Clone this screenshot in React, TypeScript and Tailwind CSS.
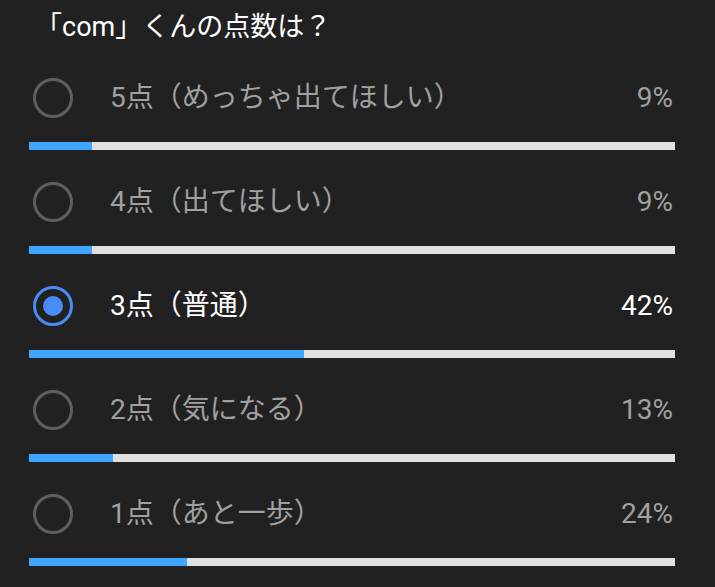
import React from "react";

const items = [
  { label: "5点（めっちゃ出てほしい）", pct: "9%", w: 63, sel: false },
  { label: "4点（出てほしい）", pct: "9%", w: 63, sel: false },
  { label: "3点（普通）", pct: "42%", w: 275, sel: true },
  { label: "2点（気になる）", pct: "13%", w: 84, sel: false },
  { label: "1点（あと一歩）", pct: "24%", w: 158, sel: false },
];

export default function App() {
  return (
    <div
      className="w-[715px] h-[587px] bg-[#212121] overflow-hidden pl-[29px] pr-[40px] pt-[9px]"
      style={{ fontFamily: 'Roboto, "Noto Sans CJK JP", sans-serif' }}
    >
      <div className="text-[27px] leading-[36px] text-white pl-[6px]">「com」くんの点数は？</div>
      <div className="mt-[33px] flex flex-col">
        {items.map((it, i) => (
          <div key={i} className="flex flex-col h-[104px]">
            <div className="flex items-center h-[40px]">
              <div className="ml-[4px] w-[40px] h-[40px] flex items-center justify-center">
                {it.sel ? (
                  <div className="w-[40px] h-[40px] rounded-full border-[3px] border-[#4a8cf7] flex items-center justify-center">
                    <div className="w-[20px] h-[20px] rounded-full bg-[#4a8cf7]" />
                  </div>
                ) : (
                  <div className="w-[40px] h-[40px] rounded-full border-[3px] border-[#5f5f5f]" />
                )}
              </div>
              <div
                className={`ml-[37px] flex-1 text-[28px] leading-[36px] ${
                  it.sel ? "text-white" : "text-[#a0a0a0]"
                }`}
              >
                {it.label}
              </div>
              <div
                className={`text-[28px] leading-[36px] mr-[2px] ${
                  it.sel ? "text-white" : "text-[#a0a0a0]"
                }`}
              >
                {it.pct}
              </div>
            </div>
            <div className="mt-[24px] h-[8px] bg-[#e0e0e0] flex">
              <div className="h-full bg-[#3ea6ff]" style={{ width: it.w }} />
            </div>
          </div>
        ))}
      </div>
    </div>
  );
}
